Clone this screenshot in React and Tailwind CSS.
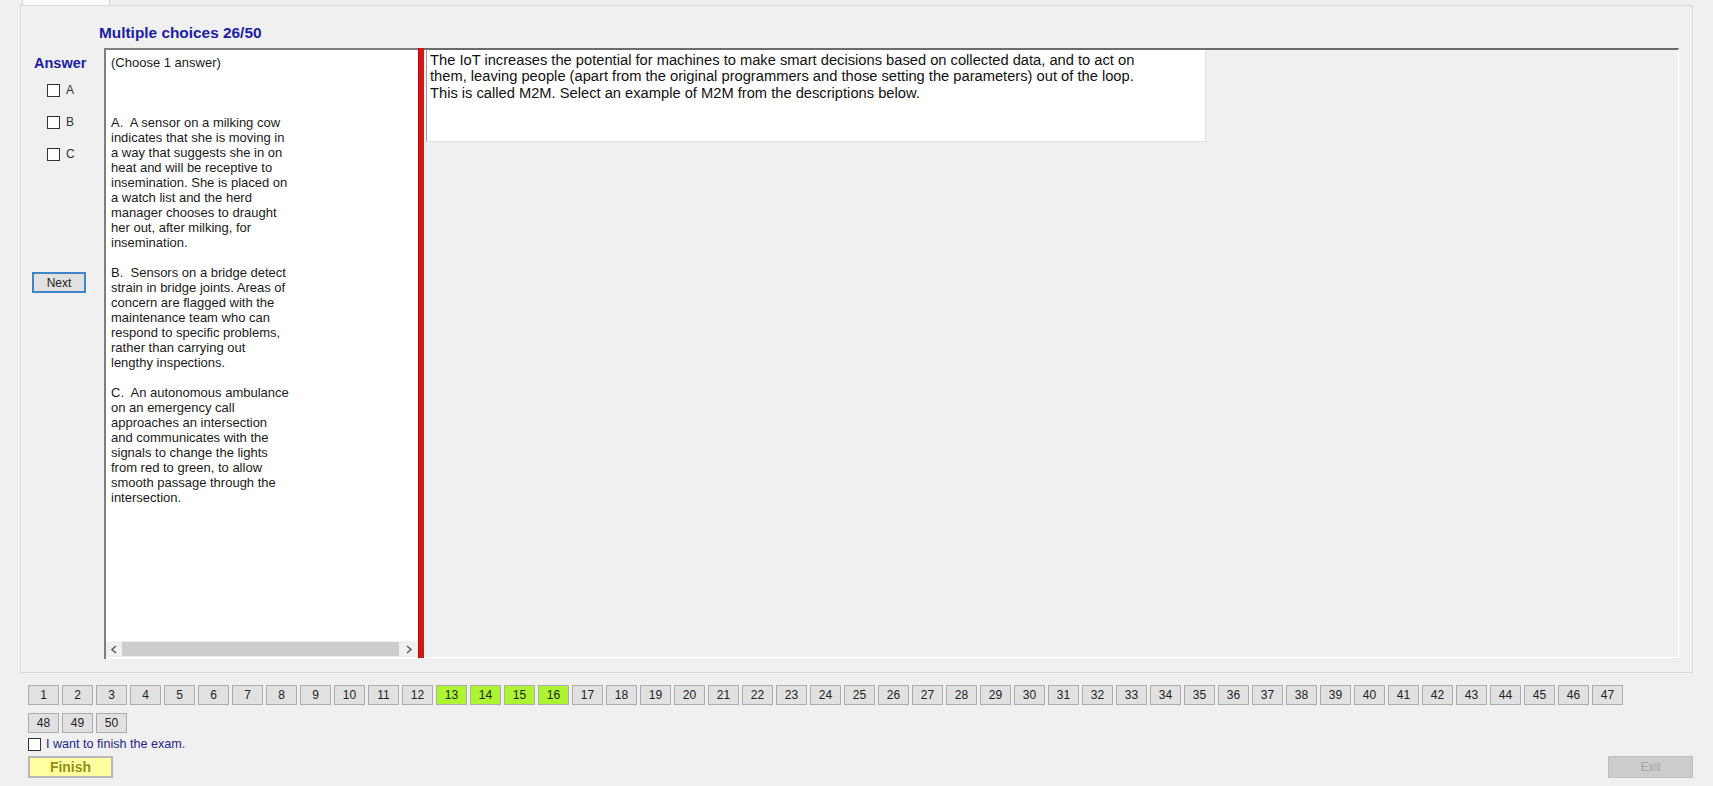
import React from 'react';

const choiceLines = [
    '(Choose 1 answer)',
    '',
    '',
    '',
    'A.\u00a0 A sensor on a milking cow',
    'indicates that she is moving in',
    'a way that suggests she in on',
    'heat and will be receptive to',
    'insemination. She is placed on',
    'a watch list and the herd',
    'manager chooses to draught',
    'her out, after milking, for',
    'insemination.',
    '',
    'B.\u00a0 Sensors on a bridge detect',
    'strain in bridge joints. Areas of',
    'concern are flagged with the',
    'maintenance team who can',
    'respond to specific problems,',
    'rather than carrying out',
    'lengthy inspections.',
    '',
    'C.\u00a0 An autonomous ambulance',
    'on an emergency call',
    'approaches an intersection',
    'and communicates with the',
    'signals to change the lights',
    'from red to green, to allow',
    'smooth passage through the',
    'intersection.',
];

const questionLines = [
    'The IoT increases the potential for machines to make smart decisions based on collected data, and to act on',
    'them, leaving people (apart from the original programmers and those setting the parameters) out of the loop.',
    'This is called M2M. Select an example of M2M from the descriptions below.',
];

const answered = [13, 14, 15, 16];

function PageButton({ n }) {
    const done = answered.includes(n);
    return (
        <div
            className={
                'w-[31px] h-[20px] flex items-center justify-center border border-[#adadad] text-[12px] text-[#222] ' +
                (done ? 'bg-[#adf532]' : 'bg-[#e1e1e1]')
            }
        >
            {n}
        </div>
    );
}

function Check({ label }) {
    return (
        <div className="flex items-center h-[13px]">
            <div className="w-[13px] h-[13px] bg-white border border-[#333]" />
            <span className="ml-[6px] text-[12px] text-[#333] leading-[13px]">{label}</span>
        </div>
    );
}

export default function App() {
    const row1 = Array.from({ length: 47 }, (_, i) => i + 1);
    const row2 = [48, 49, 50];

    return (
        <div className="w-[1713px] h-[786px] bg-[#f0f0f0] overflow-hidden font-['Liberation_Sans',Arial,sans-serif] text-[#1a1a1a]">
            {/* tab strip */}
            <div className="h-[5px] flex">
                <div className="ml-[22px] w-[88px] h-[5px] bg-[#fbfbfb] border-x border-[#d4d4d4]" />
            </div>

            {/* tab page */}
            <div className="ml-[20px] w-[1673px] h-[668px] border border-[#d9d9d9] flex flex-col">
                <div className="h-[42px] pl-[78px] pt-[18px] text-[15.4px] leading-[17px] font-bold text-[#1c1ca6]">
                    Multiple choices 26/50
                </div>

                <div className="flex h-[611px]">
                    {/* answer column */}
                    <div className="w-[83px] flex flex-col">
                        <div className="mt-[7px] pl-[13px] text-[14.5px] leading-[16px] font-bold text-[#1c1ca6]">Answer</div>
                        <div className="mt-[13px] pl-[26px] flex flex-col gap-[19px]">
                            <Check label="A" />
                            <Check label="B" />
                            <Check label="C" />
                        </div>
                        <div className="mt-[111px] ml-[11px] w-[54px] h-[21px] bg-[#e1e1e1] border-2 border-[#3f86c8] flex items-center justify-center text-[12px] text-[#222]">
                            Next
                        </div>
                    </div>

                    {/* choices text box */}
                    <div className="w-[314px] h-[611px] bg-white border-t-2 border-l-2 border-[#7f7f7f] flex flex-col">
                        <div className="flex-1 pl-[5px] pt-[5px] text-[13px] leading-[15px] whitespace-pre">
                            {choiceLines.map((l, i) => (
                                <div key={i} className="h-[15px]">{l}</div>
                            ))}
                        </div>
                        <div className="h-[16px] mb-[2px] flex items-stretch bg-[#f0f0f0]">
                            <div className="w-[16px] flex items-center justify-center">
                                <svg width="8" height="9" viewBox="0 0 8 9">
                                    <path d="M6 1 L2 4.5 L6 8" fill="none" stroke="#606060" strokeWidth="1.6" />
                                </svg>
                            </div>
                            <div className="w-[277px] my-[1px] bg-[#cdcdcd]" />
                            <div className="flex-1 flex items-center justify-center">
                                <svg width="8" height="9" viewBox="0 0 8 9">
                                    <path d="M2 1 L6 4.5 L2 8" fill="none" stroke="#606060" strokeWidth="1.6" />
                                </svg>
                            </div>
                        </div>
                    </div>

                    {/* splitter */}
                    <div className="w-[6px] h-[610px] bg-[#d21717] border-l border-[#a81010]" />

                    {/* question panel */}
                    <div className="w-[1255px] h-[610px] border-t-2 border-[#6b6b6b] border-r border-b border-r-white border-b-white">
                        <div className="ml-[2px] w-[780px] h-[92px] bg-white border-l border-[#a0a0a0] border-r border-b border-r-[#e3e3e3] border-b-[#e3e3e3] pl-[3px] pt-[2px] text-[14.7px] leading-[16.4px] text-[#111]">
                            {questionLines.map((l, i) => (
                                <div key={i} className="whitespace-nowrap">{l}</div>
                            ))}
                        </div>
                    </div>
                </div>
            </div>

            {/* navigation */}
            <div className="pl-[28px] mt-[12px] flex flex-col">
                <div className="flex gap-[3px]">
                    {row1.map(n => <PageButton key={n} n={n} />)}
                </div>
                <div className="flex gap-[3px] mt-[8px]">
                    {row2.map(n => <PageButton key={n} n={n} />)}
                </div>
                <div className="flex items-center mt-[5px] h-[13px]">
                    <div className="w-[13px] h-[13px] bg-white border border-[#333]" />
                    <span className="ml-[5px] text-[12.6px] text-[#25238f]">I want to finish the exam.</span>
                </div>
                <div className="flex justify-between pr-[20px] mt-[5px]">
                    <div className="w-[85px] h-[22px] bg-[#ffff9f] border-2 border-[#b8b8b8] flex items-center justify-center text-[14px] font-bold text-[#8f8f1c]">
                        Finish
                    </div>
                    <div className="w-[85px] h-[22px] bg-[#cccccc] border border-[#bfbfbf] flex items-center justify-center text-[12px] text-[#a6a6a6]">
                        Exit
                    </div>
                </div>
            </div>
        </div>
    );
}
